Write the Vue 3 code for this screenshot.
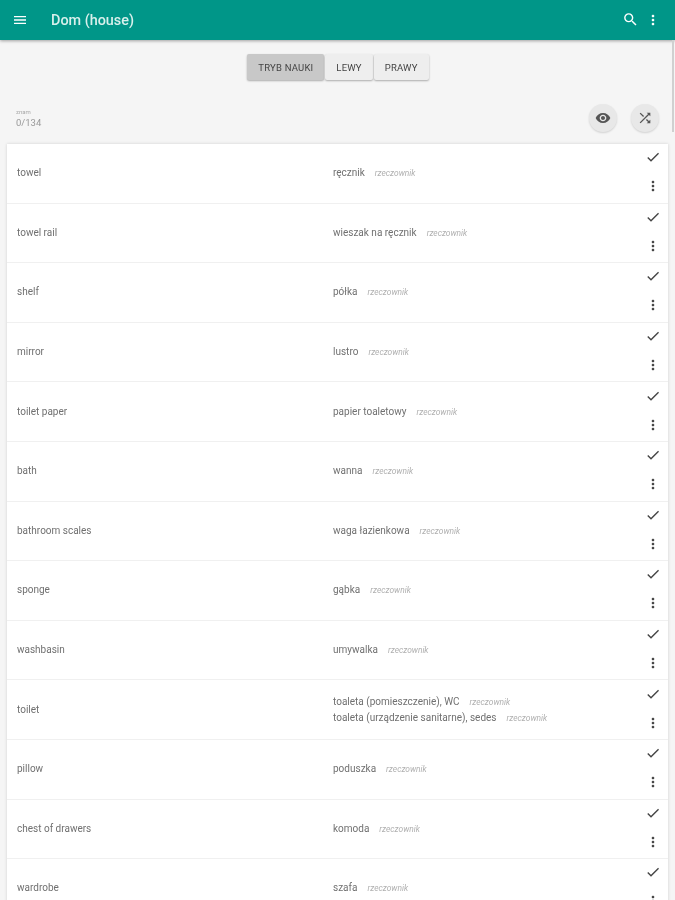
<template>
  <div class="page">
    <header class="toolbar">
      <svg class="menu-icon" viewBox="0 0 24 24"><path d="M3 18h18v-2H3v2zm0-5h18v-2H3v2zm0-7v2h18V6H3z" /></svg>
      <h1 class="title">Dom (house)</h1>
      <svg class="search-icon" viewBox="0 0 24 24"><path d="M15.5 14h-.79l-.28-.27A6.47 6.47 0 0 0 16 9.5 6.5 6.5 0 1 0 9.5 16c1.61 0 3.09-.59 4.23-1.57l.27.28v.79l5 4.99L20.49 19l-4.99-5zm-6 0C7.01 14 5 11.99 5 9.5S7.01 5 9.5 5 14 7.01 14 9.5 11.99 14 9.5 14z" /></svg>
      <svg class="more-icon" viewBox="0 0 24 24"><path :d="dotsPath" /></svg>
    </header>

    <div class="modes">
      <button v-for="mode in modes" :key="mode" class="mode" :class="{ active: mode === 'TRYB NAUKI' }">{{ mode }}</button>
    </div>

    <div class="summary">
      <div class="score">
        <span class="score-label">znam</span>
        <span class="score-value">0/134</span>
      </div>
      <div class="fabs">
        <button class="fab">
          <svg viewBox="0 0 24 24"><path d="M12 4.5C7 4.5 2.73 7.61 1 12c1.73 4.39 6 7.5 11 7.5s9.27-3.11 11-7.5c-1.73-4.39-6-7.5-11-7.5zM12 17c-2.76 0-5-2.24-5-5s2.24-5 5-5 5 2.24 5 5-2.24 5-5 5zm0-8c-1.66 0-3 1.34-3 3s1.34 3 3 3 3-1.34 3-3-1.34-3-3-3z" /></svg>
        </button>
        <button class="fab">
          <svg viewBox="0 0 24 24"><path d="M10.59 9.17 5.41 4 4 5.41l5.17 5.17 1.42-1.41zM14.5 4l2.04 2.04L4 18.59 5.41 20 17.96 7.46 20 9.5V4h-5.5zm.33 9.41-1.41 1.41 3.13 3.13L14.5 20H20v-5.5l-2.04 2.04-3.13-3.13z" /></svg>
        </button>
      </div>
    </div>

    <div class="list">
      <div v-for="word in words" :key="word.en" class="row">
        <div class="en">{{ word.en }}</div>
        <div class="translations">
          <div v-for="pl in word.pl" :key="pl" class="translation">
            <span class="pl">{{ pl }}</span>
            <span class="kind">rzeczownik</span>
          </div>
        </div>
        <div class="actions">
          <svg viewBox="0 0 24 24"><path d="M9 16.17 4.83 12l-1.42 1.41L9 19 21 7l-1.41-1.41z" /></svg>
          <svg viewBox="0 0 24 24"><path :d="dotsPath" /></svg>
        </div>
      </div>
    </div>

    <div class="scrollbar"></div>
  </div>
</template>

<script setup>
const dotsPath = 'M12 8c1.1 0 2-.9 2-2s-.9-2-2-2-2 .9-2 2 .9 2 2 2zm0 2c-1.1 0-2 .9-2 2s.9 2 2 2 2-.9 2-2-.9-2-2-2zm0 6c-1.1 0-2 .9-2 2s.9 2 2 2 2-.9 2-2-.9-2-2-2z'

const modes = ['TRYB NAUKI', 'LEWY', 'PRAWY']

const words = [
  { en: 'towel', pl: ['ręcznik'] },
  { en: 'towel rail', pl: ['wieszak na ręcznik'] },
  { en: 'shelf', pl: ['półka'] },
  { en: 'mirror', pl: ['lustro'] },
  { en: 'toilet paper', pl: ['papier toaletowy'] },
  { en: 'bath', pl: ['wanna'] },
  { en: 'bathroom scales', pl: ['waga łazienkowa'] },
  { en: 'sponge', pl: ['gąbka'] },
  { en: 'washbasin', pl: ['umywalka'] },
  { en: 'toilet', pl: ['toaleta (pomieszczenie), WC', 'toaleta (urządzenie sanitarne), sedes'] },
  { en: 'pillow', pl: ['poduszka'] },
  { en: 'chest of drawers', pl: ['komoda'] },
  { en: 'wardrobe', pl: ['szafa'] }
]
</script>

<style>
html, body {
  margin: 0;
  height: 100%;
  overflow: hidden;
  background: #f5f5f5;
}
</style>

<style scoped>
.page {
  position: relative;
  height: 900px;
  overflow: hidden;
  background: #f5f5f5;
  font-family: Roboto, "Liberation Sans", sans-serif;
  filter: blur(0.4px);
}

.toolbar {
  display: flex;
  align-items: center;
  height: 40px;
  padding: 0 14px 0 12px;
  box-sizing: border-box;
  background: #009688;
  color: #fff;
  box-shadow: 0 1px 3px rgba(0, 0, 0, 0.35);
}

.toolbar svg {
  fill: #fff;
}

.menu-icon {
  width: 16px;
  height: 16px;
}

.title {
  flex: 1;
  margin: 0 0 0 23px;
  font-size: 14.4px;
  font-weight: 500;
  color: #d8f0ec;
}

.search-icon {
  width: 17px;
  height: 17px;
  margin-bottom: 1px;
}

.more-icon {
  width: 16px;
  height: 16px;
  margin-left: 6px;
}

.modes {
  display: flex;
  justify-content: center;
  padding: 14px 0 0 2px;
}

.mode {
  height: 26px;
  padding: 0 11px;
  margin-right: 1px;
  border: 0;
  border-radius: 2px;
  background: #eeeeee;
  color: #444;
  font-family: inherit;
  font-size: 9.5px;
  font-weight: 400;
  letter-spacing: 0.2px;
  box-shadow: 0 1px 2px rgba(0, 0, 0, 0.3);
}

.mode.active {
  background: #c8c8c8;
}

.summary {
  display: flex;
  justify-content: space-between;
  align-items: flex-start;
  height: 64px;
}

.score {
  display: flex;
  flex-direction: column;
  padding: 28px 0 0 16px;
}

.score-label {
  font-size: 6px;
  line-height: 8px;
  color: #aaa;
}

.score-value {
  font-size: 9.5px;
  line-height: 14px;
  color: #999;
}

.fabs {
  display: flex;
  gap: 14px;
  padding: 24px 16px 0 0;
}

.fab {
  display: flex;
  align-items: center;
  justify-content: center;
  width: 28px;
  height: 28px;
  padding: 0;
  border: 0;
  border-radius: 50%;
  background: #e8e8e8;
  box-shadow: 0 1px 2px rgba(0, 0, 0, 0.15);
}

.fab svg {
  width: 16px;
  height: 16px;
  fill: #555;
}

.list {
  margin: 0 7px;
  background: #fff;
  box-shadow: 0 0 3px rgba(0, 0, 0, 0.15);
}

.row {
  display: flex;
  align-items: center;
  height: 59.6px;
  box-sizing: border-box;
  padding: 0 7px 1px 10px;
  border-bottom: 1px solid #f0f0f0;
  font-size: 10px;
  color: #707070;
}

.en {
  width: 316px;
}

.translations {
  flex: 1;
  display: flex;
  flex-direction: column;
  gap: 5px;
}

.pl {
  margin-right: 10px;
}

.kind {
  font-size: 8.4px;
  font-style: italic;
  color: #b0b0b0;
}

.actions {
  display: flex;
  flex-direction: column;
  align-items: center;
  gap: 13px;
  padding-bottom: 2px;
}

.actions svg {
  display: block;
  width: 16px;
  height: 16px;
  fill: #444;
}

.scrollbar {
  position: absolute;
  top: 40px;
  right: 1px;
  width: 2px;
  height: 92px;
  background: #d0d0d0;
}
</style>
